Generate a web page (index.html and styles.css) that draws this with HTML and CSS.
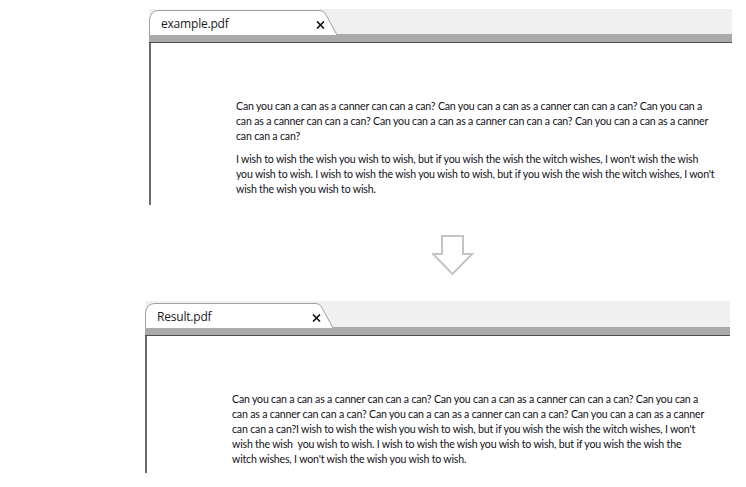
FILE: index.html
```html
<!DOCTYPE html>
<html>
<head>
<meta charset="utf-8">
<link rel="stylesheet" href="styles.css">
</head>
<body>
<div class="viewer viewer-top">
  <div class="tabstrip">
    <div class="tab">
      <svg class="tab-shape" width="192" height="26" viewBox="0 0 192 26"><path d="M0.5,26 L0.5,11 Q1.5,1.5 10,1.5 L171,1.5 Q174.5,1.5 176.5,5 L188,26" fill="#fff" stroke="#a0a0a0" stroke-width="1"/></svg>
      <span class="tab-label">example.pdf</span>
      <svg class="tab-close" width="9" height="8" viewBox="0 0 9 8"><path d="M1,0.5 L8,7.5 M8,0.5 L1,7.5" stroke="#111" stroke-width="1.6"/></svg>
    </div>
  </div>
  <div class="bar"></div>
  <div class="page page-top">
    <p class="para">Can you can a can as a canner can can a can? Can you can a can as a canner can can a can? Can you can a<br>can as a canner can can a can? Can you can a can as a canner can can a can? Can you can a can as a canner<br>can can a can?</p>
    <p class="para">I wish to wish the wish you wish to wish, but if you wish the wish the witch wishes, I won't wish the wish<br>you wish to wish. I wish to wish the wish you wish to wish, but if you wish the wish the witch wishes, I won't<br>wish the wish you wish to wish.</p>
  </div>
</div>
<div class="arrow-row">
  <svg class="arrow" width="42" height="41" viewBox="0 0 42 41"><path d="M10,1 L31,1 L31,19 L40,19 L20.5,39 L1,19 L10,19 Z" fill="none" stroke="#c4c4c4" stroke-width="2"/></svg>
</div>
<div class="viewer viewer-bottom">
  <div class="tabstrip">
    <div class="tab">
      <svg class="tab-shape" width="192" height="26" viewBox="0 0 192 26"><path d="M0.5,26 L0.5,11 Q1.5,1.5 10,1.5 L171,1.5 Q174.5,1.5 176.5,5 L188,26" fill="#fff" stroke="#a0a0a0" stroke-width="1"/></svg>
      <span class="tab-label">Result.pdf</span>
      <svg class="tab-close" width="9" height="8" viewBox="0 0 9 8"><path d="M1,0.5 L8,7.5 M8,0.5 L1,7.5" stroke="#111" stroke-width="1.6"/></svg>
    </div>
  </div>
  <div class="bar"></div>
  <div class="page page-bottom">
    <p class="para">Can you can a can as a canner can can a can? Can you can a can as a canner can can a can? Can you can a<br>can as a canner can can a can? Can you can a can as a canner can can a can? Can you can a can as a canner<br>can can a can?I wish to wish the wish you wish to wish, but if you wish the wish the witch wishes, I won't<br>wish the wish &nbsp;you wish to wish. I wish to wish the wish you wish to wish, but if you wish the wish the<br>witch wishes, I won't wish the wish you wish to wish.</p>
  </div>
</div>
</body>
</html>
```
FILE: styles.css
```css
html, body {
  margin: 0;
  padding: 0;
  background: #fff;
}
body {
  width: 746px;
  height: 487px;
  overflow: hidden;
}
.viewer-top {
  margin-left: 149px;
  margin-top: 9px;
  width: 583px;
}
.viewer-bottom {
  margin-left: 145px;
  width: 585px;
}
.tabstrip {
  height: 25px;
  background: #f0f0f0;
  display: flex;
  align-items: flex-end;
}
.viewer-bottom .tabstrip {
  height: 26px;
}
.tab {
  position: relative;
  width: 190px;
  height: 25px;
  display: flex;
  align-items: center;
}
.tab-shape {
  position: absolute;
  left: 0;
  top: 0;
}
.tab-label {
  position: relative;
  margin-left: 12px;
  margin-top: 3px;
  font-family: "Open Sans", "Liberation Sans", sans-serif;
  font-size: 12px;
  letter-spacing: -0.2px;
  color: #1a1a1a;
}
.tab-close {
  position: absolute;
  left: 167px;
  top: 12px;
}
.bar {
  height: 8px;
  background: #aaaaaa;
  border-bottom: 1px solid #4f4f4f;
}
.page {
  border-left: 2px solid #6a6a6a;
  padding: 56px 0 0 85px;
  box-sizing: border-box;
}
.page-top {
  height: 162px;
}
.page-bottom {
  height: 137px;
}
.para {
  margin: 0 0 8px 0;
  font-family: Lato, "Open Sans", sans-serif;
  font-size: 10.6px;
  letter-spacing: -0.19px;
  line-height: 15px;
  color: #111118;
  white-space: nowrap;
}
.arrow-row {
  height: 96px;
  padding-top: 30px;
  padding-left: 432px;
  box-sizing: border-box;
}
.arrow {
  display: block;
}
```
